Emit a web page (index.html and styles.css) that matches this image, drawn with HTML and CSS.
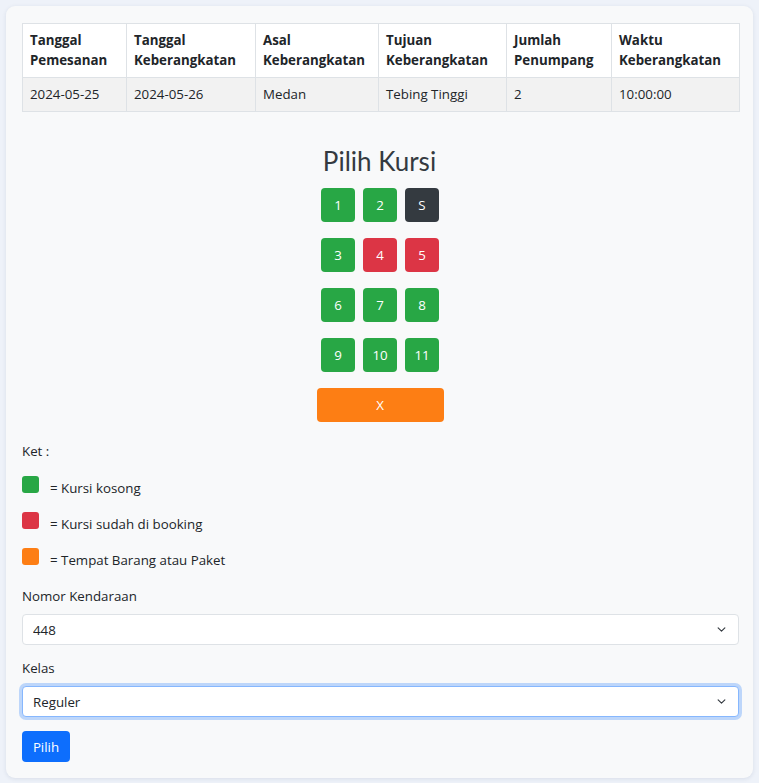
FILE: index.html
```html
<!DOCTYPE html>
<html lang="id">
<head>
<meta charset="utf-8">
<title>Pilih Kursi</title>
<link rel="stylesheet" href="styles.css">
</head>
<body>
<div class="card">
  <table class="info-table">
    <thead>
      <tr>
        <th class="c1">Tanggal<br>Pemesanan</th>
        <th class="c2">Tanggal<br>Keberangkatan</th>
        <th class="c3">Asal<br>Keberangkatan</th>
        <th class="c4">Tujuan<br>Keberangkatan</th>
        <th class="c5">Jumlah<br>Penumpang</th>
        <th class="c6">Waktu<br>Keberangkatan</th>
      </tr>
    </thead>
    <tbody>
      <tr>
        <td>2024-05-25</td>
        <td>2024-05-26</td>
        <td>Medan</td>
        <td>Tebing Tinggi</td>
        <td>2</td>
        <td>10:00:00</td>
      </tr>
    </tbody>
  </table>

  <h2 class="title">Pilih Kursi</h2>
  <div class="seat-area">
    <div class="seats">
      <button class="seat green">1</button>
      <button class="seat green">2</button>
      <button class="seat dark">S</button>
      <button class="seat green">3</button>
      <button class="seat red">4</button>
      <button class="seat red">5</button>
      <button class="seat green">6</button>
      <button class="seat green">7</button>
      <button class="seat green">8</button>
      <button class="seat green">9</button>
      <button class="seat green">10</button>
      <button class="seat green">11</button>
    </div>
    <button class="cargo">X</button>
  </div>

  <p class="ket">Ket :</p>
  <div class="legend-row"><span class="sq green"></span><span class="legend-text">= Kursi kosong</span></div>
  <div class="legend-row"><span class="sq red"></span><span class="legend-text">= Kursi sudah di booking</span></div>
  <div class="legend-row"><span class="sq orange"></span><span class="legend-text">= Tempat Barang atau Paket</span></div>

  <label class="form-label first">Nomor Kendaraan</label>
  <select class="form-select">
    <option>448</option>
  </select>

  <label class="form-label">Kelas</label>
  <select class="form-select focused">
    <option>Reguler</option>
  </select>

  <button class="btn-primary">Pilih</button>
</div>
</body>
</html>
```

FILE: styles.css
```css
* { box-sizing: border-box; }

html, body {
  margin: 0;
  padding: 0;
}

body {
  background: #eef2f9;
  padding: 6px;
  font-family: "Open Sans", "Noto Sans", sans-serif;
  font-size: 13.3px;
  line-height: 20px;
  color: #212529;
}

.card {
  width: 747px;
  height: 772px;
  background: #f8f9fa;
  border-radius: 9px;
  box-shadow: 0 1px 4px rgba(30, 50, 90, 0.10);
  padding: 17px 16px 16px;
}

.info-table {
  width: 717px;
  border-collapse: collapse;
  table-layout: fixed;
}

.info-table th,
.info-table td {
  border: 1px solid #dee2e6;
  padding: 6px 7px 7px;
  text-align: left;
  vertical-align: top;
}

.info-table th {
  background: #fff;
  font-weight: 700;
}

.info-table td {
  background: #f2f2f2;
}

.c1 { width: 104px; }
.c2 { width: 129px; }
.c3 { width: 123px; }
.c4 { width: 128px; }
.c5 { width: 105px; }
.c6 { width: 128px; }

.title {
  margin: 34px 0 11px;
  text-align: center;
  font-family: Lato, "Open Sans", sans-serif;
  font-weight: 400;
  font-size: 26px;
  line-height: 31px;
  color: #343a40;
}

.seat-area {
  display: flex;
  flex-direction: column;
  align-items: center;
  gap: 16px;
  padding-left: 1px;
}

.seats {
  display: grid;
  grid-template-columns: repeat(3, 34px);
  column-gap: 8px;
  row-gap: 16px;
}

.seat {
  width: 34px;
  height: 34px;
  border: 0;
  border-radius: 4px;
  color: #fff;
  font-family: "Open Sans", sans-serif;
  font-size: 13.3px;
  padding: 0;
}

.green { background: #28a745; }
.red { background: #dc3545; }
.dark { background: #343a40; }
.orange { background: #fd7e14; }

.cargo {
  width: 127px;
  height: 34px;
  border: 0;
  border-radius: 4px;
  background: #fd7e14;
  color: #fff;
  font-family: "Open Sans", sans-serif;
  font-size: 13.3px;
}

.ket {
  margin: 19px 0 15px;
}

.legend-row {
  margin-bottom: 14px;
}

.sq {
  display: inline-block;
  width: 17px;
  height: 17px;
  border-radius: 3px;
  vertical-align: baseline;
}

.legend-text {
  margin-left: 11px;
}

.form-label {
  display: block;
  margin: 2px 0 8px;
}

.form-label.first {
  margin-top: 16px;
}

.form-select {
  display: block;
  width: 717px;
  height: 31px;
  margin-bottom: 13px;
  padding: 0 30px 0 10px;
  border: 1px solid #dee2e6;
  border-radius: 4px;
  background-color: #fff;
  background-image: url("data:image/svg+xml,%3csvg xmlns='http://www.w3.org/2000/svg' viewBox='0 0 16 16'%3e%3cpath fill='none' stroke='%23343a40' stroke-linecap='round' stroke-linejoin='round' stroke-width='2' d='m2 5 6 6 6-6'/%3e%3c/svg%3e");
  background-repeat: no-repeat;
  background-position: right 11px center;
  background-size: 11px 9px;
  font-family: "Open Sans", sans-serif;
  font-size: 13.3px;
  color: #212529;
  appearance: none;
  -webkit-appearance: none;
}

.form-select.focused {
  border-color: #86b7fe;
  box-shadow: 0 0 0 3px rgba(13, 110, 253, 0.25);
  outline: 0;
  margin-bottom: 14px;
}

.btn-primary {
  display: block;
  width: 48px;
  height: 31px;
  padding: 0;
  border: 0;
  border-radius: 4px;
  background: #0d6efd;
  color: #fff;
  font-family: "Open Sans", sans-serif;
  font-size: 13.3px;
}
```
